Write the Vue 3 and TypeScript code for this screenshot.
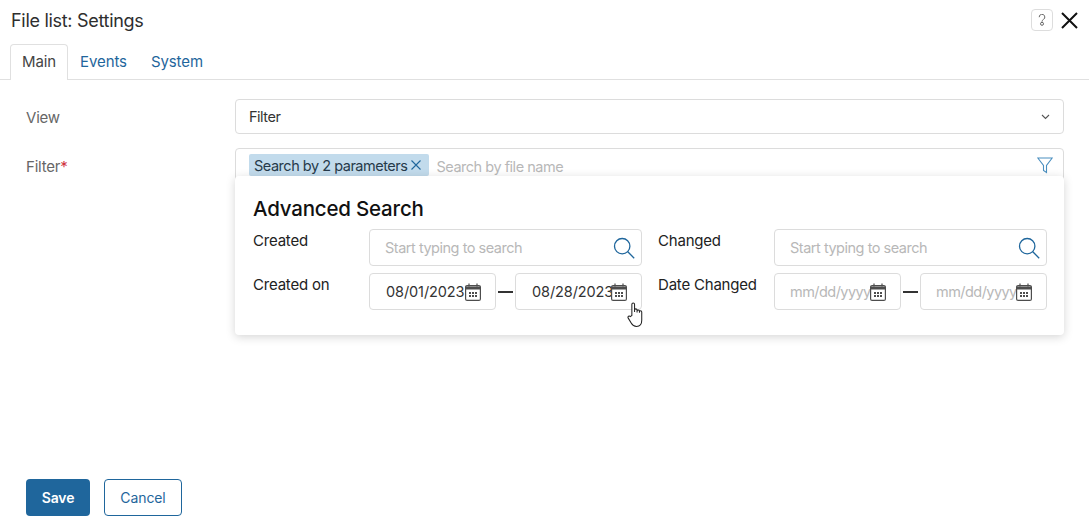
<script setup lang="ts">
const tabs = ['Main', 'Events', 'System']
const groups = [
  { label: 'Created', date: 'Created on', from: '08/01/2023', to: '08/28/2023', filled: true },
  { label: 'Changed', date: 'Date Changed', from: 'mm/dd/yyyy', to: 'mm/dd/yyyy', filled: false },
]
</script>

<template>
  <div class="page">
    <header class="head">
      <h1 class="title">File list: Settings</h1>
      <button class="help" aria-label="Help">
        <svg width="8" height="12" viewBox="0 0 8 12" fill="none" stroke="#666" stroke-width="1">
          <path d="M1.200 3.200a2.800 2.800 0 1 1 4.200 2.300C4.500 6.100 4 6.600 4 7.700" />
          <circle cx="4" cy="9.800" r="1.500" />
        </svg>
      </button>
      <button class="close" aria-label="Close">
        <svg width="17" height="17" viewBox="0 0 17 17" stroke="#111" stroke-width="2" fill="none">
          <path d="M1 1l15 15M16 1L1 16" />
        </svg>
      </button>
    </header>

    <nav class="tabs">
      <span v-for="(t, i) in tabs" :key="t" class="tab" :class="{ active: i === 0 }">{{ t }}</span>
    </nav>

    <main class="form">
      <div class="row">
        <label class="label">View</label>
        <div class="select">
          <span>Filter</span>
          <svg width="9" height="6" viewBox="0 0 9 6" fill="none" stroke="#555" stroke-width="1.100">
            <path d="M1 1l3.500 3.500L8 1" />
          </svg>
        </div>
      </div>

      <div class="row filter-row">
        <label class="label">Filter<span class="req">*</span></label>
        <div class="filter-wrap">
          <div class="filter">
            <span class="chip">Search by 2 parameters
              <svg width="10" height="10" viewBox="0 0 10 10" stroke="#1f669c" stroke-width="1.100" fill="none">
                <path d="M.5.5l9 9M9.500.5l-9 9" />
              </svg>
            </span>
            <span class="ph">Search by file name</span>
            <svg class="funnel" width="16" height="17" viewBox="0 0 16 17" fill="none" stroke="#4a8fc0" stroke-width="1.100">
              <path d="M.8 1h14.400L9.500 8.500v7l-3-2v-5z" />
            </svg>
          </div>

          <section class="pop">
            <h2 class="pop-title">Advanced Search</h2>
            <div class="pop-grid">
              <div v-for="g in groups" :key="g.label" class="group">
                <span class="pop-label">{{ g.label }}</span>
                <div class="box search">
                  <span class="ph">Start typing to search</span>
                  <svg width="22" height="22" viewBox="0 0 22 22" fill="none" stroke="#1f669c" stroke-width="1.300">
                    <circle cx="9.200" cy="9.200" r="7.700" />
                    <path d="M14.800 14.800l6.400 6.400" />
                  </svg>
                </div>
                <span class="pop-label">{{ g.date }}</span>
                <div class="dates">
                  <div v-for="d in [g.from, g.to]" :key="d + g.label" class="box date">
                    <span class="date-val" :class="{ ph: !g.filled }">{{ d }}</span>
                    <svg class="cal" width="16" height="18" viewBox="0 0 16 18" fill="none" stroke="#4d4d4d" stroke-width="1.200">
                      <rect x=".6" y="2.600" width="14.800" height="14.800" rx="1.500" />
                      <path d="M.6 5h14.800" stroke-width="3" />
                      <path d="M4 .5v3M12 .5v3" />
                      <path d="M4 10h2M7 10h2M10 10h2M4 13h2M7 13h2M10 13h2" stroke-width="2" />
                    </svg>
                  </div>
                  <span class="dash"></span>
                </div>
              </div>
            </div>
            <svg class="hand" width="17" height="26" viewBox="0 0 16 25" fill="#fff" stroke="#222" stroke-width="1">
              <path d="M4.500 13V2.200a1.300 1.300 0 0 1 2.600 0V9.500V7.800a1.200 1.200 0 0 1 2.400 0V10V8.500a1.200 1.200 0 0 1 2.300 0v1.800V9.500a1.100 1.100 0 0 1 2.200 0v8c0 3.500-1.700 6-5 6-2.700 0-4-1.200-5-3L1 15.500c-.9-1.500 1-2.700 2-1.500z" />
            </svg>
          </section>
        </div>
      </div>
    </main>

    <footer class="foot">
      <button class="btn primary">Save</button>
      <button class="btn ghost">Cancel</button>
    </footer>
  </div>
</template>

<style scoped>
.page {
  height: 522px;
  display: flex;
  flex-direction: column;
  font-family: Inter, "Noto Sans", sans-serif;
  font-size: 14.500px;
  letter-spacing: -0.480px;
  color: #333;
  background: #fff;
  overflow: hidden;
}
.head {
  display: flex;
  align-items: center;
  height: 44px;
  padding: 0 11px;
  flex: none;
}
.title {
  margin: 0 auto 3px 0;
  font-size: 18px;
  font-weight: 400;
  letter-spacing: -0.300px;
  color: #2e2e2e;
}
.help {
  width: 22px;
  height: 22px;
  margin: 0 8px 4px 0;
  padding: 0;
  border: 1px solid #ddd;
  border-radius: 4px;
  background: #fff;
  display: grid;
  place-items: center;
}
.close {
  width: 17px;
  height: 17px;
  padding: 0;
  margin: 0 0 4px;
  border: 0;
  background: none;
  display: grid;
}
.tabs {
  display: flex;
  box-sizing: border-box;
  height: 36px;
  padding-left: 10px;
  border-bottom: 1px solid #e0e0e0;
  flex: none;
}
.tab {
  box-sizing: border-box;
  height: 36px;
  padding: 7px 11px 0;
  font-size: 15px;
  letter-spacing: -0.100px;
  color: #1f669c;
  border: 1px solid transparent;
  border-bottom: 0;
}
.tab.active {
  color: #444;
  border-color: #e0e0e0;
  border-radius: 4px 4px 0 0;
  background: #fff;
}
.form {
  padding: 19px 25px 0 26px;
  display: flex;
  flex-direction: column;
  gap: 14px;
}
.row {
  display: grid;
  grid-template-columns: 209px 829px;
}
.label {
  padding-top: 9px;
  font-size: 15px;
  letter-spacing: -0.200px;
  color: #666;
}
.req {
  color: #d0343f;
}
.select {
  height: 35px;
  box-sizing: border-box;
  border: 1px solid #dcdcdc;
  border-radius: 4px;
  padding: 0 13px 0 13px;
  display: flex;
  align-items: center;
  justify-content: space-between;
  color: #333;
}
.filter-wrap {
  position: relative;
}
.filter {
  height: 36px;
  box-sizing: border-box;
  border: 1px solid #dcdcdc;
  border-radius: 4px;
  padding: 5px 10px 0 13px;
  display: flex;
  align-items: flex-start;
  gap: 7px;
}
.chip {
  display: flex;
  align-items: center;
  gap: 4px;
  height: 22px;
  padding: 0 8px 0 5px;
  background: #c2dbec;
  border-radius: 2px;
  color: #263a4a;
  white-space: nowrap;
}
.ph {
  color: #b8b8b8;
  white-space: nowrap;
}
.filter > .ph {
  margin-top: 4px;
}
.funnel {
  margin: 3px 0 0 auto;
}
.pop {
  position: absolute;
  left: 0;
  right: 0;
  top: 28px;
  height: 159px;
  box-sizing: border-box;
  padding: 20px 17px 0 18px;
  background: #fff;
  border-radius: 4px;
  box-shadow: 0 2px 10px rgba(0, 0, 0, 0.17);
}
.pop-title {
  margin: 0 0 8px;
  font-size: 20.500px;
  line-height: 25px;
  font-weight: 500;
  letter-spacing: -0.200px;
  color: #111;
}
.pop-grid {
  display: grid;
  grid-template-columns: 389px 389px;
  column-gap: 16px;
}
.group {
  display: grid;
  grid-template-columns: 116px 273px;
  row-gap: 7px;
}
.pop-label {
  color: #222;
  padding-top: 2px;
  line-height: 20px;
  font-size: 15px;
  letter-spacing: -0.200px;
}
.box {
  height: 37px;
  box-sizing: border-box;
  border: 1px solid #dcdcdc;
  border-radius: 4px;
  background: #fff;
  display: flex;
  align-items: center;
}
.search {
  padding: 0 6px 0 15px;
  justify-content: space-between;
}
.dates {
  position: relative;
  display: grid;
  grid-template-columns: 127px 127px;
  column-gap: 19px;
}
.date {
  padding-left: 16px;
  position: relative;
  overflow: hidden;
}
.date-val {
  color: #333;
  white-space: nowrap;
  letter-spacing: -0.100px;
}
.date-val.ph {
  color: #b8b8b8;
  letter-spacing: -0.550px;
  margin-left: -1px;
}
.cal {
  position: absolute;
  right: 14px;
  top: 9px;
  background: #fff;
}
.dash {
  position: absolute;
  left: 129px;
  top: 18px;
  width: 15px;
  height: 2px;
  background: #333;
}
.hand {
  position: absolute;
  left: 392px;
  top: 126px;
}
.foot {
  margin-top: auto;
  display: flex;
  gap: 14px;
  padding: 0 0 6px 26px;
}
.btn {
  height: 37px;
  border-radius: 4px;
  font-family: inherit;
  font-size: 14px;
  letter-spacing: -0.100px;
  padding: 0;
}
.primary {
  width: 64px;
  border: 0;
  background: #1f669c;
  color: #fff;
  font-weight: 600;
}
.ghost {
  width: 78px;
  border: 1px solid #1f669c;
  background: #fff;
  color: #1f669c;
}
</style>
